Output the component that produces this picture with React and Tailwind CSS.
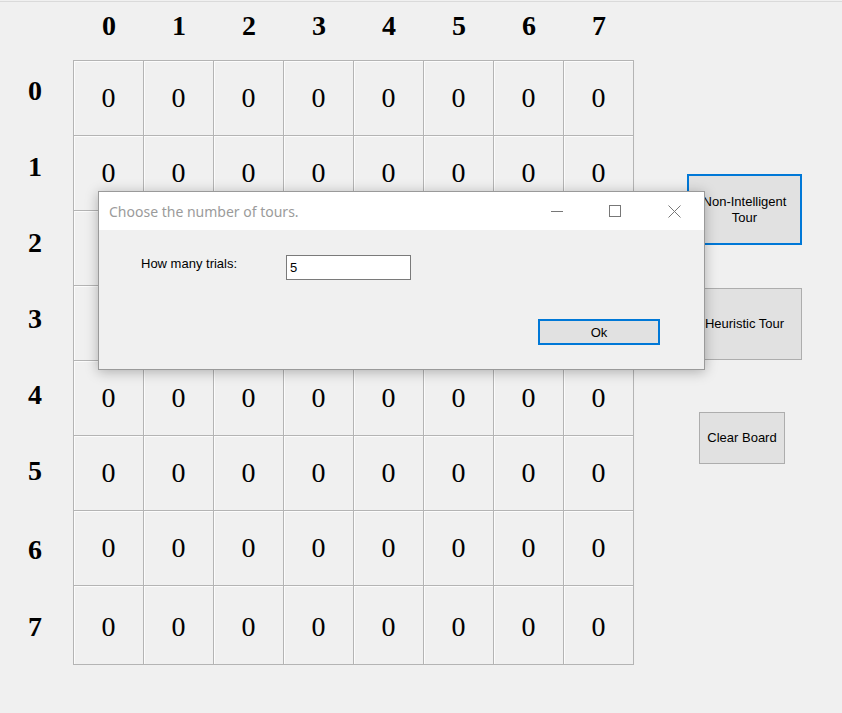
import React from 'react';

const cols = [0, 1, 2, 3, 4, 5, 6, 7];

function Cell({ last }) {
  return (
    <div
      className={`flex items-center justify-center border-l border-t border-[#b4b4b4] shadow-[inset_1px_1px_0_#fcfcfc] text-[28px] text-black ${
        last ? 'pt-[4px]' : ''
      }`}
    >
      0
    </div>
  );
}

export default function App() {
  const rowHeights = ['h-[75px]', 'h-[75px]', 'h-[75px]', 'h-[75px]', 'h-[75px]', 'h-[75px]', 'h-[75px]', 'h-[79px]'];
  const headHeights = ['h-[76px]', 'h-[76px]', 'h-[76px]', 'h-[76px]', 'h-[76px]', 'h-[76px]', 'h-[82px]', 'h-[72px]'];

  return (
    <div className="w-[842px] h-[713px] bg-[#f0f0f0] relative overflow-hidden pt-px" style={{ fontFamily: '"Liberation Serif", serif' }}>
      <div className="border-t border-[#dadada] flex">
        {/* board */}
        <div className="flex flex-col">
          {/* column headers */}
          <div className="flex h-[58px] pl-[73px]">
            {cols.map((c) => (
              <div key={c} className="w-[70px] flex justify-center pt-[6px] pl-[2px] text-[28px] font-bold text-black leading-[36px]">
                {c}
              </div>
            ))}
          </div>

          <div className="flex">
            {/* row headers */}
            <div className="w-[73px] flex flex-col -mt-[7px]">
              {cols.map((r) => (
                <div key={r} className={`${headHeights[r]} flex items-center justify-center text-[28px] font-bold text-black pr-[3px]`}>
                  {r}
                </div>
              ))}
            </div>

            {/* grid */}
            <div className="flex flex-col border-r border-b border-[#b4b4b4]">
              {cols.map((r) => (
                <div key={r} className={`grid grid-cols-[repeat(8,70px)] ${rowHeights[r]}`}>
                  {cols.map((c) => (
                    <Cell key={c} last={r === 7} />
                  ))}
                </div>
              ))}
            </div>
          </div>
        </div>

        {/* right buttons */}
        <div
          className="flex flex-col items-start pt-[172px] ml-[53px] text-[13px] text-black"
          style={{ fontFamily: '"Liberation Sans", Arial, sans-serif' }}
        >
          <button className="w-[115px] h-[71px] bg-[#e1e1e1] border-2 border-[#0078d7] leading-[16px] text-center">
            Non-Intelligent
            <br />
            Tour
          </button>
          <button className="w-[115px] h-[72px] mt-[43px] bg-[#e1e1e1] border border-[#adadad] text-center">
            Heuristic Tour
          </button>
          <button className="w-[86px] h-[52px] mt-[52px] ml-[12px] bg-[#e1e1e1] border border-[#adadad] text-center">
            Clear Board
          </button>
        </div>
      </div>

      {/* dialog */}
      <div
        className="absolute left-[98px] top-[191px] w-[607px] h-[179px] bg-[#f0f0f0] border border-[#9a9a9a] shadow-[0_2px_12px_rgba(0,0,0,0.28)] flex flex-col"
        style={{ fontFamily: '"Liberation Sans", Arial, sans-serif' }}
      >
        <div className="h-[38px] bg-white flex items-center">
          <div className="flex-1 pl-[10px] text-[14px] text-[#9b9b9b]" style={{ fontFamily: '"Noto Sans", "Open Sans", sans-serif' }}>
            Choose the number of tours.
          </div>
          <div className="w-[58px] h-full flex items-center justify-center">
            <svg width="12" height="12" viewBox="0 0 12 12">
              <line x1="0" y1="6.5" x2="12" y2="6.5" stroke="#777" strokeWidth="1" />
            </svg>
          </div>
          <div className="w-[58px] h-full flex items-center justify-center">
            <svg width="12" height="12" viewBox="0 0 12 12">
              <rect x="0.5" y="0.5" width="11" height="11" fill="none" stroke="#777" strokeWidth="1" />
            </svg>
          </div>
          <div className="w-[60px] h-full flex items-center justify-center">
            <svg width="13" height="13" viewBox="0 0 13 13">
              <line x1="0.5" y1="0.5" x2="12.5" y2="12.5" stroke="#777" strokeWidth="1" />
              <line x1="12.5" y1="0.5" x2="0.5" y2="12.5" stroke="#777" strokeWidth="1" />
            </svg>
          </div>
        </div>

        <div className="flex-1 flex flex-col pt-[25px]">
          <div className="flex items-center h-[25px] pl-[42px]">
            <div className="w-[145px] text-[13px] text-black -mt-[8px]">How many trials:</div>
            <div className="w-[125px] h-[25px] bg-white border border-[#7a7a7a] text-[13px] text-black pl-[3px] flex items-center">
              5
            </div>
          </div>
          <div className="flex mt-[39px] pl-[439px]">
            <button className="w-[122px] h-[26px] bg-[#e1e1e1] border-2 border-[#0078d7] text-[13px] text-black leading-none">
              Ok
            </button>
          </div>
        </div>
      </div>
    </div>
  );
}
